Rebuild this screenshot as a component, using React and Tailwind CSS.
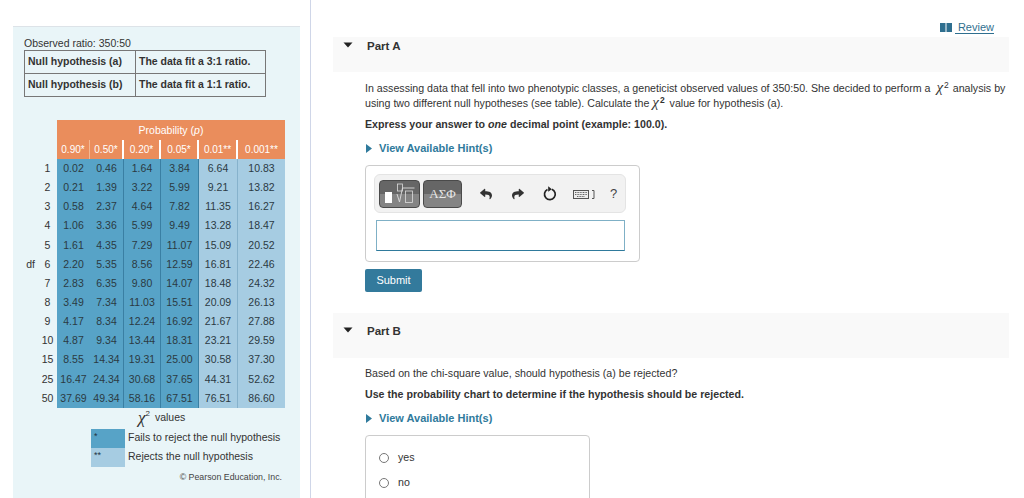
import React from 'react';
import { FaReply, FaShare } from 'react-icons/fa';

const rows = [
  ['1', '0.02', '0.46', '1.64', '3.84', '6.64', '10.83'],
  ['2', '0.21', '1.39', '3.22', '5.99', '9.21', '13.82'],
  ['3', '0.58', '2.37', '4.64', '7.82', '11.35', '16.27'],
  ['4', '1.06', '3.36', '5.99', '9.49', '13.28', '18.47'],
  ['5', '1.61', '4.35', '7.29', '11.07', '15.09', '20.52'],
  ['6', '2.20', '5.35', '8.56', '12.59', '16.81', '22.46'],
  ['7', '2.83', '6.35', '9.80', '14.07', '18.48', '24.32'],
  ['8', '3.49', '7.34', '11.03', '15.51', '20.09', '26.13'],
  ['9', '4.17', '8.34', '12.24', '16.92', '21.67', '27.88'],
  ['10', '4.87', '9.34', '13.44', '18.31', '23.21', '29.59'],
  ['15', '8.55', '14.34', '19.31', '25.00', '30.58', '37.30'],
  ['25', '16.47', '24.34', '30.68', '37.65', '44.31', '52.62'],
  ['50', '37.69', '49.34', '58.16', '67.51', '76.51', '86.60'],
];

const colClasses = [
  'w-[33px] bg-[#57a3c7]',
  'w-[34px] bg-[#57a3c7] border-r border-[#3a7fa3]',
  'w-[37px] bg-[#57a3c7] border-r border-[#3a7fa3]',
  'w-[38px] bg-[#57a3c7] border-r border-[#3a7fa3]',
  'w-[39px] bg-[#a6cce2] border-r border-[#86b2cc]',
  'w-[47px] bg-[#a6cce2]',
];

const headers = [
  ['0.90*', 'w-[33px] border-r border-[#f3b893]'],
  ['0.50*', 'w-[34px] border-r-2 border-white'],
  ['0.20*', 'w-[37px] border-r-2 border-white'],
  ['0.05*', 'w-[38px] border-r-2 border-white'],
  ['0.01**', 'w-[39px] border-r-2 border-white'],
  ['0.001**', 'w-[47px]'],
];

const mathButton = 'h-[28px] rounded-[4px] border border-[#4a4a4a] bg-[linear-gradient(#666666_0%,#666666_50%,#848484_50%,#848484_100%)]';

function Hint() {
  return (
    <div className="flex items-center text-[#2f7a9c] font-bold text-[11px] leading-[14px]">
      <svg width="6" height="9" viewBox="0 0 6 9" fill="currentColor" className="ml-[1px]">
        <path d="M0 0l6 4.5L0 9z" />
      </svg>
      <span className="ml-[7px]">View Available Hint(s)</span>
    </div>
  );
}

function PartBand({ label, height, top }) {
  return (
    <div className={`bg-[#f9f9f9] flex ${height} ${top}`}>
      <div className="w-[34px] pl-[10px] pt-[1px] text-[#222]">
        <svg width="10" height="10" viewBox="0 0 10 10" fill="currentColor">
          <path d="M0.5 2.5h9L5 7.5z" />
        </svg>
      </div>
      <div className="font-bold text-[11.5px] text-[#333] leading-[14px]">{label}</div>
    </div>
  );
}

function Chi({ bold }) {
  return (
    <span className="whitespace-nowrap">
      <span className="font-['Liberation_Serif',serif] italic text-[15px] leading-[10px]">χ</span>
      <sup className={`text-[8.5px] leading-[8px] ml-[1px] ${bold ? 'font-bold mr-[2px]' : ''}`}>2</sup>
    </span>
  );
}

export default function App() {
  return (
    <div className="w-[1024px] h-[498px] overflow-hidden bg-white flex font-['Liberation_Sans',Arial,sans-serif] text-[#333]">
      {/* left column */}
      <div className="w-[311px] h-full border-r border-[#cfd6e8] pl-[13px] pt-[26px] shrink-0">
        <div className="w-[287px] h-[472px] bg-[#e9f5f8] border-t border-[#dde3e8] pl-[11px] pt-[9px]">
          <div className="text-[10.5px] leading-[14px] text-[#333]">Observed ratio: 350:50</div>
          <table className="w-[242px] border-collapse text-[10.5px] font-bold text-[#333] table-fixed">
            <tbody>
              <tr className="h-[23px]">
                <td className="border border-[#777] w-[111px] pl-[3px]">Null hypothesis (a)</td>
                <td className="border border-[#777] pl-[3px]">The data fit a 3:1 ratio.</td>
              </tr>
              <tr className="h-[23px]">
                <td className="border border-[#777] w-[111px] pl-[3px]">Null hypothesis (b)</td>
                <td className="border border-[#777] pl-[3px]">The data fit a 1:1 ratio.</td>
              </tr>
            </tbody>
          </table>

          {/* chi square chart */}
          <div className="mt-[23px] ml-[-2px] flex flex-col">
            <div className="flex">
              <div className="w-[35px]" />
              <div className="w-[228px] bg-[#ea8d5c] text-white">
                <div className="h-[20px] leading-[20px] text-center text-[10.5px]">Probability (<i>p</i>)</div>
                <div className="flex h-[19px]">
                  {headers.map(([label, cls]) => (
                    <div key={label} className={`${cls} text-center leading-[19px] text-[10px] box-border whitespace-nowrap`}>{label}</div>
                  ))}
                </div>
              </div>
            </div>
            <div className="flex">
              <div className="w-[13px] text-[10.5px] text-right leading-[19.15px] pt-[95.75px]">df</div>
              <div className="w-[22px] flex flex-col pl-[3px]">
                {rows.map((r) => (
                  <div key={r[0]} className="h-[19.15px] leading-[19.15px] text-[10.5px] text-center">{r[0]}</div>
                ))}
              </div>
              {[1, 2, 3, 4, 5, 6].map((c) => (
                <div key={c} className={`${colClasses[c - 1]} box-border flex flex-col`}>
                  {rows.map((r) => (
                    <div key={r[0]} className="h-[19.15px] leading-[19.15px] text-[10.5px] text-center text-[#2b3a42] whitespace-nowrap">{r[c]}</div>
                  ))}
                </div>
              ))}
            </div>
            <div className="ml-[116px] h-[21px] text-[10.5px] flex items-center">
              <span className="font-['Liberation_Serif',serif] italic text-[17px] leading-[14px]">χ</span>
              <sup className="text-[8px] mr-[5px]">2</sup>
              <span>values</span>
            </div>
            <div className="flex ml-[69px] h-[19px]">
              <div className="w-[34px] bg-[#57a3c7] text-[9px] pl-[3px] leading-[14px] text-[#234]">*</div>
              <div className="ml-[3px] text-[10.5px] leading-[17px] whitespace-nowrap">Fails to reject the null hypothesis</div>
            </div>
            <div className="flex ml-[69px] h-[19px]">
              <div className="w-[34px] bg-[#a6cce2] text-[9px] pl-[3px] leading-[14px] text-[#234]">**</div>
              <div className="ml-[3px] text-[10.5px] leading-[17px] whitespace-nowrap">Rejects the null hypothesis</div>
            </div>
            <div className="w-[260px] text-right text-[8.8px] leading-[12px] mt-[4px] text-[#444]">© Pearson Education, Inc.</div>
          </div>
        </div>
      </div>

      {/* right column */}
      <div className="flex-1 pl-[22px] pr-[15px]">
        <div className="h-[37px] pt-[21px] flex justify-end pr-[15px]">
          <div className="flex items-center h-[13px] text-[#2f6f8f] text-[11px]">
            <svg width="12" height="9" viewBox="0 0 12 9" fill="#2f6f8f" className="mr-[3px]">
              <rect x="0" y="0" width="5.5" height="9" />
              <rect x="6.5" y="0" width="5.5" height="9" />
            </svg>
            <span className="pl-[3px] border-b border-[#2f6f8f] leading-[12px]">Review</span>
          </div>
        </div>

        <PartBand label="Part A" height="h-[35px]" top="pt-[2px]" />
        <div className="pl-[32px]">
          <p className="mt-[9px] text-[10.65px] leading-[15px] whitespace-nowrap">
            In assessing data that fell into two phenotypic classes, a geneticist observed values of 350:50. She decided to perform a&nbsp;&nbsp;<Chi /><span className="ml-[4px]">analysis by</span>
          </p>
          <p className="text-[10.65px] leading-[15px] whitespace-nowrap">
            using two different null hypotheses (see table). Calculate the <Chi bold /> value for hypothesis (a).
          </p>
          <p className="mt-[6px] text-[10.65px] leading-[14px] font-bold">
            Express your answer to <i>one</i> decimal point (example: 100.0).
          </p>
          <div className="mt-[10px]"><Hint /></div>

          {/* answer box */}
          <div className="mt-[10px] w-[275px] h-[97px] border border-[#ccc] rounded-[4px] px-[8px] pt-[8px]">
            <div className="h-[39px] w-[252px] bg-[#f2f2f2] border border-[#e4e4e4] rounded-[6px] flex items-center pl-[4px]">
              <div className={`${mathButton} w-[41px] flex items-center justify-center`}>
                <svg width="32" height="22" viewBox="0 0 32 22" fill="none">
                  <rect x="1" y="9" width="7" height="11" fill="#fff" />
                  <rect x="13.5" y="1" width="5" height="7" stroke="#ddd" strokeWidth="0.8" />
                  <path d="M13 11l2.5 8 3-14h12" stroke="#ddd" strokeWidth="0.9" />
                  <rect x="21.5" y="8" width="7" height="11.5" stroke="#ddd" strokeWidth="0.8" />
                </svg>
              </div>
              <div className={`${mathButton} ml-[3px] w-[39px] text-[#e8e8e8] text-[13px] leading-[25px] text-center font-['Liberation_Serif',serif]`}>
                ΑΣΦ
              </div>
              <FaReply className="ml-[18px] text-[#333] w-[12px] h-[12px]" />
              <FaShare className="ml-[20px] text-[#333] w-[12px] h-[12px]" />
              <svg className="ml-[19px]" width="14" height="15" viewBox="0 0 14 15" fill="none">
                <path d="M8.8 3.2A5.4 5.4 0 1 1 4.5 3.4" stroke="#222" strokeWidth="1.7" />
                <path d="M5.2 0.3l3.6 2.9-3.6 2.6z" fill="#222" />
              </svg>
              <svg className="ml-[16px]" width="22" height="10" viewBox="0 0 22 10" fill="none">
                <rect x="0.5" y="1.5" width="15" height="8" fill="#eee" stroke="#555" />
                <path d="M2 3.5h12M2 5.5h12M4 7.5h8" stroke="#666" strokeWidth="1" strokeDasharray="1 0.6" />
                <path d="M19 1.5h2v8h-2" stroke="#555" />
              </svg>
              <span className="ml-[15px] text-[13px] text-[#444]">?</span>
            </div>
            <div className="mt-[7px] w-[249px] ml-[2px] h-[31px] border border-[#7fb0c6] border-b-[#2f7a9c]" />
          </div>

          <button className="mt-[7px] block w-[57px] h-[23px] bg-[#337a9c] rounded-[2px] text-white text-[11px] leading-[23px] text-center">Submit</button>
        </div>

        <div className="h-[21px]" />
        <PartBand label="Part B" height="h-[45px]" top="pt-[11px]" />
        <div className="pl-[32px]">
          <p className="mt-[8px] text-[10.65px] leading-[14px]">Based on the chi-square value, should hypothesis (a) be rejected?</p>
          <p className="mt-[7px] text-[10.65px] leading-[14px] font-bold">Use the probability chart to determine if the hypothesis should be rejected.</p>
          <div className="mt-[10px]"><Hint /></div>
          <div className="mt-[10px] w-[225px] h-[80px] border border-[#ccc] rounded-[4px] pl-[13px] pt-[15px]">
            <label className="flex items-center h-[14px] text-[10.65px]">
              <span className="w-[10px] h-[10px] rounded-full border border-[#777] bg-white" />
              <span className="ml-[9px]">yes</span>
            </label>
            <label className="flex items-center h-[14px] mt-[11px] text-[10.65px]">
              <span className="w-[10px] h-[10px] rounded-full border border-[#777] bg-white" />
              <span className="ml-[9px]">no</span>
            </label>
          </div>
        </div>
      </div>
    </div>
  );
}
